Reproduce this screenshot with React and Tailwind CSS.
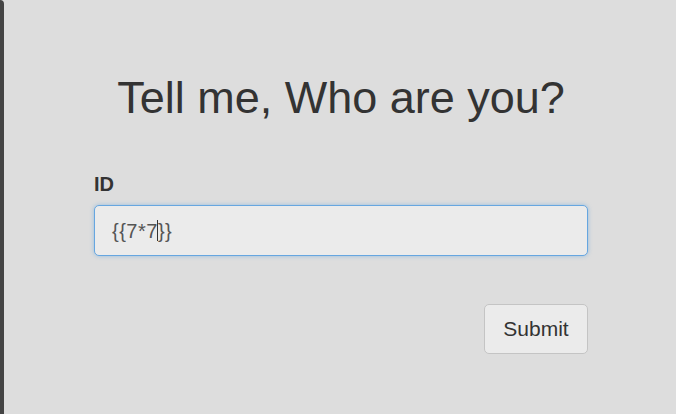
import React from "react";

export default function App() {
  return (
    <div className="h-[414px] w-[676px] overflow-hidden bg-[#dddddd] flex" style={{ fontFamily: '"Liberation Sans", Arial, sans-serif' }}>
      {/* dark edge of the window behind */}
      <div className="w-[4px] shrink-0 bg-[#444444] rounded-tr-[4px]" />

      <main className="flex-1 flex flex-col items-center pt-[72px] pl-[2px]">
        <h1 className="text-[45px] leading-[52px] text-[#333333]">Tell me, Who are you?</h1>

        <form className="w-[494px] mt-[49px] flex flex-col" onSubmit={(e) => e.preventDefault()}>
          <label className="text-[20px] font-bold text-[#333333] leading-[22px]">ID</label>
          <div className="mt-[10px] h-[51px] rounded-[5px] border border-[#66a6e0] bg-[#ebebeb] shadow-[0_0_4px_rgba(102,166,224,0.6)] flex items-center pl-[17px] text-[20px] tracking-[0.5px] text-[#555555]">
            <span>{"{{7*7"}</span>
            <span className="inline-block w-px h-[21px] -ml-px bg-[#333333]" />
            <span>{"}}"}</span>
          </div>

          <div className="flex justify-end mt-[48px]">
            <button className="w-[104px] h-[50px] rounded-[5px] border border-[#c4c4c4] bg-[#ebebeb] text-[21px] text-[#333333]">
              Submit
            </button>
          </div>
        </form>
      </main>
    </div>
  );
}
